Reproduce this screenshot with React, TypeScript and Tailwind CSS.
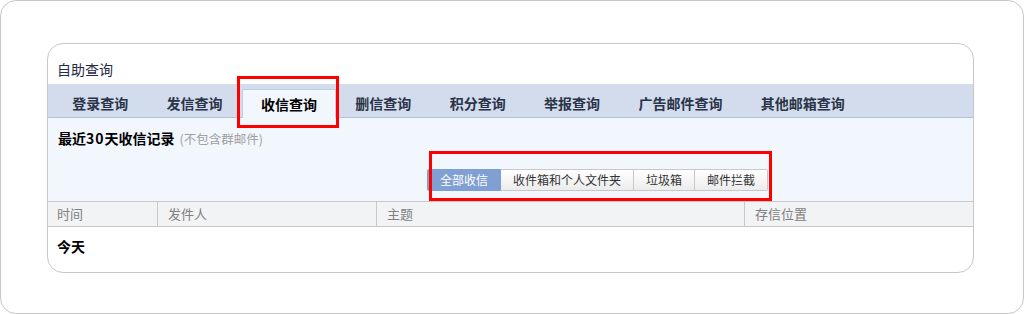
import React from "react";

const font = { fontFamily: '"Noto Sans CJK SC", "Noto Sans", sans-serif' };

const tabs = ["登录查询", "发信查询", "收信查询", "删信查询", "积分查询", "举报查询", "广告邮件查询", "其他邮箱查询"];

export default function App() {
  return (
    <div className="relative h-[314px] w-[1024px] bg-white" style={font}>
      <div className="h-[314px] w-[1024px] rounded-[16px] border border-[#c8c8c8] pl-[46px] pt-[42px]">
        <div className="w-[927px] h-[230px] overflow-hidden rounded-[16px] border border-[#c8c8c8] bg-white">
          <div className="h-[40px] pl-[9px] pt-[15px] text-[14px] leading-[20px] text-[#1f2a44]">自助查询</div>
          <div className="flex h-[34px] items-end border-b border-[#b0c0dc] bg-[#d3dcec] pl-[5px]">
            {tabs.map((t) =>
              t === "收信查询" ? (
                <div
                  key={t}
                  className="mb-[-1px] flex h-[29px] items-center border border-b-0 border-[#c3cee2] bg-[#f2f6fd] px-[18.2px] text-[14px] font-bold text-black"
                >
                  {t}
                </div>
              ) : (
                <div key={t} className="flex h-[28px] items-center px-[19.2px] text-[14px] font-bold text-[#2a3347]">
                  {t}
                </div>
              )
            )}
          </div>
          <div className="h-[83px] bg-[#f2f6fd]">
            <div className="flex items-baseline pl-[10px] pt-[10px] leading-[20px]">
              <span className="text-[14px] font-bold text-black">最近<span className="tracking-[1px]">30</span>天收信记录</span>
              <span className="ml-[5px] text-[12.5px] text-[#a0a0a0]">(不包含群邮件)</span>
            </div>
            <div className="ml-[379px] mt-[20px] flex h-[22px] text-[12px]">
              <div className="flex items-center rounded-l-[2px] border border-[#7f9fd2] bg-[#809fd2] px-[12px] text-white">全部收信</div>
              <div className="flex items-center border border-l-0 border-[#c8c8c8] bg-gradient-to-b from-white to-[#ececec] px-[12px] text-[#333]">收件箱和个人文件夹</div>
              <div className="flex items-center border border-l-0 border-[#c8c8c8] bg-gradient-to-b from-white to-[#ececec] px-[12px] text-[#333]">垃圾箱</div>
              <div className="flex items-center rounded-r-[2px] border border-l-0 border-[#c8c8c8] bg-gradient-to-b from-white to-[#ececec] px-[12px] text-[#333]">邮件拦截</div>
            </div>
          </div>
          <div className="flex h-[26px] border-y border-[#c8c8c8] bg-[#f2f3f5] text-[13px] leading-[24px] text-[#808080]">
            <div className="w-[110px] border-r border-[#c8c8c8] pl-[9px]">时间</div>
            <div className="w-[219px] border-r border-[#c8c8c8] pl-[10px]">发件人</div>
            <div className="w-[368px] border-r border-[#c8c8c8] pl-[10px]">主题</div>
            <div className="flex-1 pl-[10px]">存信位置</div>
          </div>
          <div className="pl-[9px] pt-[9px] text-[14px] font-bold leading-[20px] text-black">今天</div>
        </div>
      </div>
      <div className="absolute left-[237px] top-[76px] h-[52px] w-[102px] border-[3px] border-[#ff0000]" />
      <div className="absolute left-[429px] top-[151px] h-[50px] w-[343px] border-[3px] border-[#ff0000]" />
    </div>
  );
}
